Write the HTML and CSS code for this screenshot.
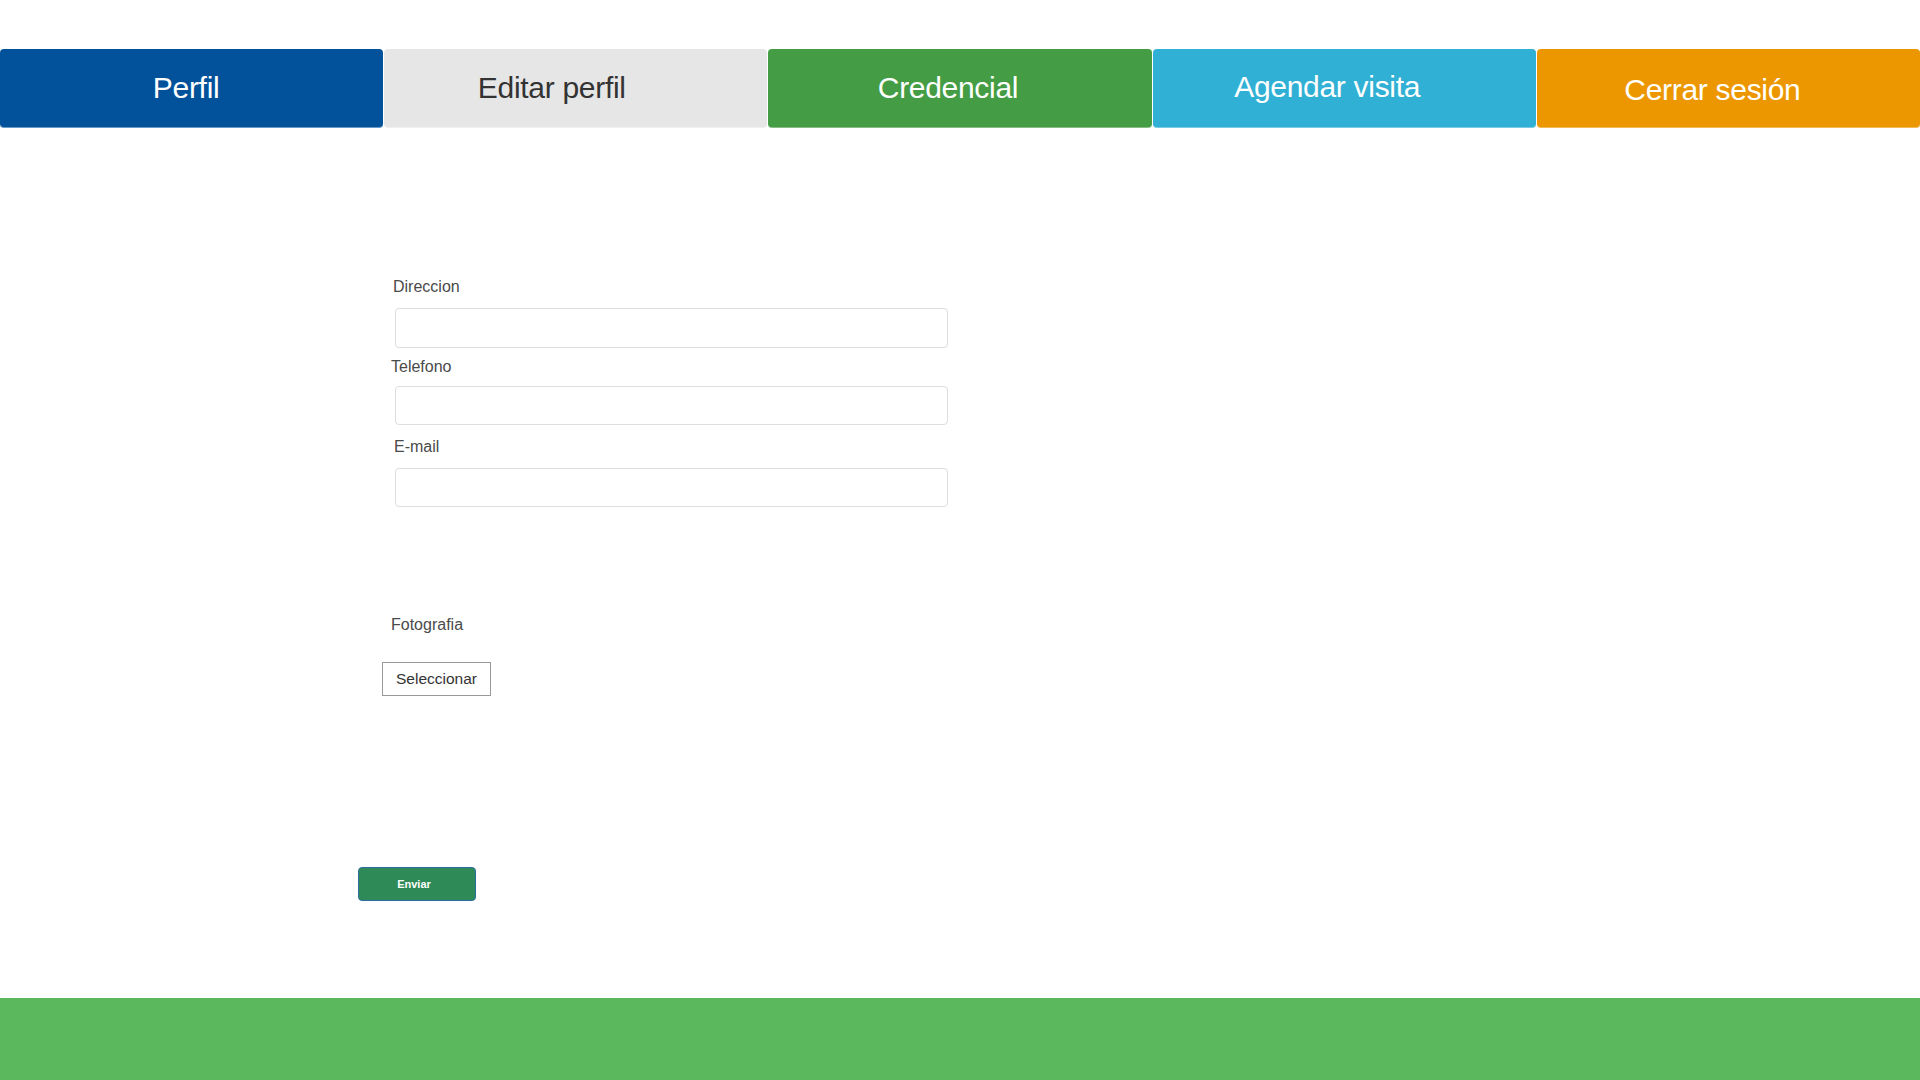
FILE: index.html
```html
<!DOCTYPE html>
<html lang="es">
<head>
<meta charset="utf-8">
<title>Editar perfil</title>
<link rel="stylesheet" href="styles.css">
</head>
<body>
<div class="page">
  <nav class="nav">
    <a class="nav-btn btn-perfil">Perfil</a>
    <a class="nav-btn btn-editar">Editar perfil</a>
    <a class="nav-btn btn-cred">Credencial</a>
    <a class="nav-btn btn-agendar">Agendar visita</a>
    <a class="nav-btn btn-cerrar">Cerrar sesión</a>
  </nav>
  <main class="main">
    <form class="form">
      <label class="lbl lbl-dir">Direccion</label>
      <input class="field field-dir" type="text">
      <label class="lbl lbl-tel">Telefono</label>
      <input class="field field-tel" type="text">
      <label class="lbl lbl-mail">E-mail</label>
      <input class="field field-mail" type="text">
      <label class="lbl lbl-foto">Fotografia</label>
      <button type="button" class="select-btn">Seleccionar</button>
      <button type="button" class="send-btn">Enviar</button>
    </form>
  </main>
  <footer class="footer"></footer>
</div>
</body>
</html>
```
FILE: styles.css
```css
* { box-sizing: border-box; }
html, body { margin: 0; padding: 0; background: #fff; }
body { font-family: "Liberation Sans", Arial, sans-serif; color: #333; }
.page { min-height: 1080px; display: flex; flex-direction: column; }

.nav {
  display: grid;
  grid-template-columns: repeat(5, minmax(0, 1fr));
  column-gap: 1px;
  margin-top: 49px;
  height: 79px;
}
.nav-btn {
  display: flex;
  align-items: center;
  justify-content: center;
  font-size: 30px;
  letter-spacing: -0.3px;
  color: #fff;
  border-radius: 4px;
  text-decoration: none;
  border-bottom: 1px solid rgba(255,255,255,0.35);
  white-space: nowrap;
}
.btn-perfil { background: #02529b; padding-right: 11px; border-bottom-color: #6b9bc8; }
.btn-editar { background: #e6e6e6; color: #333; padding-right: 48px; }
.btn-cred { background: #449d44; padding-right: 24px; }
.btn-agendar { background: #31b0d5; padding-right: 34px; padding-bottom: 3px; }
.btn-cerrar { background: #ec9700; padding-right: 32px; padding-top: 4px; }

.main { flex: 1; }
.form {
  display: flex;
  flex-direction: column;
  align-items: flex-start;
  padding-top: 149px;
}
.lbl {
  font-size: 16px;
  line-height: 20px;
  color: #4a4a4a;
}
.lbl-dir { margin-left: 393px; }
.lbl-tel { margin-left: 391px; margin-top: 9px; }
.lbl-mail { margin-left: 394px; margin-top: 12px; }
.lbl-foto { margin-left: 391px; margin-top: 108px; }

.field {
  margin-left: 395px;
  width: 553px;
  height: 40px;
  border: 1px solid #ddd;
  border-radius: 4px;
  background: #fff;
  font: 16px "Liberation Sans", Arial, sans-serif;
}
.field-dir { margin-top: 11px; }
.field-tel { margin-top: 9px; height: 39px; }
.field-mail { margin-top: 11px; height: 39px; }

.select-btn {
  margin-left: 382px;
  margin-top: 27px;
  width: 109px;
  height: 34px;
  padding: 0;
  border: 1px solid #999;
  border-radius: 0;
  background: #fff;
  color: #333;
  font: 15.5px "Liberation Sans", Arial, sans-serif;
}
.send-btn {
  margin-left: 358px;
  margin-top: 171px;
  width: 118px;
  height: 34px;
  padding: 0 6px 0 0;
  border: 1px solid #2e6da4;
  border-radius: 4px;
  background: #2e8b57;
  color: #fff;
  font: bold 11px "Liberation Sans", Arial, sans-serif;
}

.footer {
  height: 82px;
  background: #5cb85c;
}
```
